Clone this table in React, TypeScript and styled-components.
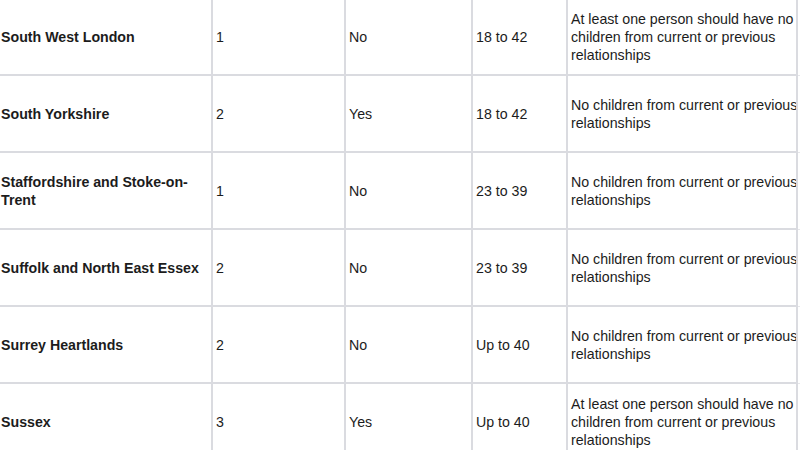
import React from "react";
import styled, { createGlobalStyle } from "styled-components";

const Global = createGlobalStyle`
  html, body { margin: 0; padding: 0; background: #ffffff; overflow: hidden; }
  body { font-family: "Liberation Sans", Arial, sans-serif; color: #1f1f1f; }
`;

const Page = styled.div`
  width: 800px;
  height: 450px;
  overflow: hidden;
  background: #fff;
`;

const Table = styled.table`
  border-collapse: collapse;
  table-layout: fixed;
  width: 900px;
  margin: -3px 0 0 -4px;
`;

const Col = styled.col<{ $w: number }>`
  width: ${(p) => p.$w}px;
`;

const Cell = styled.td<{ $bold?: boolean }>`
  border: 2px solid #dadbe0;
  height: 74px;
  padding: 0 3px;
  vertical-align: middle;
  font-size: 14.2px;
  line-height: 18px;
  font-weight: ${(p) => (p.$bold ? 700 : 400)};
  color: #1c1c1c;
  overflow: hidden;
  white-space: normal;
`;

const NoteText = styled.div`
  width: 232px;
`;

const EdgeCell = styled.td`
  border: 1px solid #e6e6ea;
  height: 74px;
`;

type Row = { area: string; n: string; yes: string; age: string; note: string };

const LONG = "At least one person should have no children from current or previous relationships";
const SHORT = "No children from current or previous relationships";

const rows: Row[] = [
  { area: "South West London", n: "1", yes: "No", age: "18 to 42", note: LONG },
  { area: "South Yorkshire", n: "2", yes: "Yes", age: "18 to 42", note: SHORT },
  { area: "Staffordshire and Stoke-on-Trent", n: "1", yes: "No", age: "23 to 39", note: SHORT },
  { area: "Suffolk and North East Essex", n: "2", yes: "No", age: "23 to 39", note: SHORT },
  { area: "Surrey Heartlands", n: "2", yes: "No", age: "Up to 40", note: SHORT },
  { area: "Sussex", n: "3", yes: "Yes", age: "Up to 40", note: LONG },
];

export default function App() {
  return (
    <Page>
      <Global />
      <Table>
        <colgroup>
          <Col $w={215} />
          <Col $w={133} />
          <Col $w={127} />
          <Col $w={95} />
          <Col $w={230} />
          <Col $w={100} />
        </colgroup>
        <tbody>
          {rows.map((r) => (
            <tr key={r.area}>
              <Cell $bold>{r.area}</Cell>
              <Cell>{r.n}</Cell>
              <Cell>{r.yes}</Cell>
              <Cell>{r.age}</Cell>
              <Cell>
                <NoteText>{r.note}</NoteText>
              </Cell>
              <EdgeCell />
            </tr>
          ))}
        </tbody>
      </Table>
    </Page>
  );
}
